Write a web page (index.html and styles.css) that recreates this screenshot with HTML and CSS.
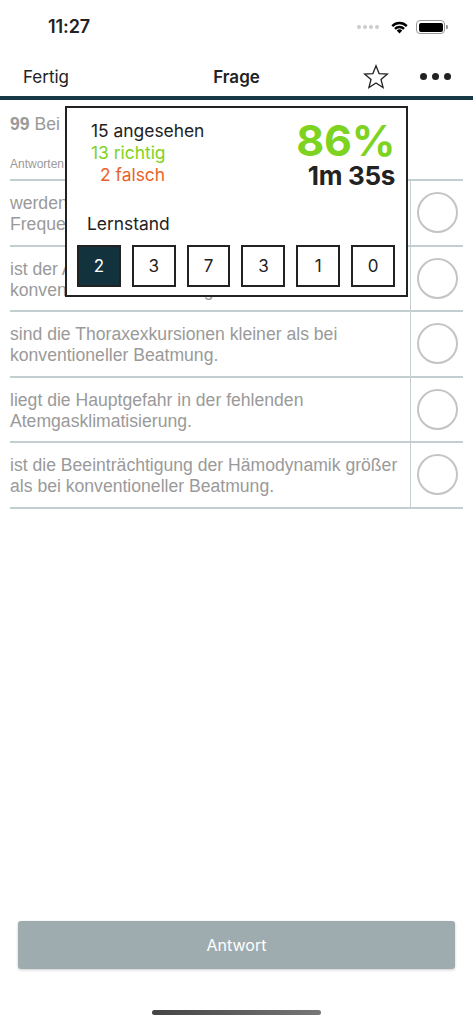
FILE: index.html
```html
<!DOCTYPE html>
<html lang="de">
<head>
<meta charset="utf-8">
<title>Frage</title>
<link rel="stylesheet" href="styles.css">
</head>
<body>
<div class="screen">
  <div class="status">
    <span class="time">11:27</span>
    <div class="status-icons">
      <span class="signal"><i></i><i></i><i></i><i></i></span>
      <svg class="wifi" width="18" height="13" viewBox="0 0 18 13"><path d="M9 12.6 6.4 9.9a3.7 3.7 0 0 1 5.2 0z" fill="#000"/><path d="M3.9 7.4a7.2 7.2 0 0 1 10.2 0l-1.6 1.6a5 5 0 0 0-7 0z" fill="#000"/><path d="M1.3 4.8a10.9 10.9 0 0 1 15.4 0l-1.6 1.6a8.6 8.6 0 0 0-12.2 0z" fill="#000"/></svg>
      <span class="battery"><span class="battery-fill"></span></span>
    </div>
  </div>
  <div class="nav">
    <span class="nav-left">Fertig</span>
    <span class="nav-title">Frage</span>
    <div class="nav-right">
      <svg class="star" width="26" height="26" viewBox="0 0 26 26"><path d="M13 1.8 16.1 9.6 24.4 10.1 18 15.4 20.1 23.5 13 19 5.9 23.5 8 15.4 1.6 10.1 9.9 9.6Z" fill="none" stroke="#222" stroke-width="1.3" stroke-linejoin="miter"/></svg>
      <span class="dots"><i></i><i></i><i></i></span>
    </div>
  </div>
  <div class="navline"></div>
  <div class="content">
    <p class="question"><b>99</b> Bei der Hochfrequenzbeatmung</p>
    <div class="label">Antworten</div>
    <ul class="answers">
      <li><span class="atext">werden hohe Atemzugvolumina mit niedriger Frequenz appliziert.</span><span class="check"><span class="circle"></span></span></li>
      <li><span class="atext">ist der Atemwegsmitteldruck höher als bei konventioneller Beatmung.</span><span class="check"><span class="circle"></span></span></li>
      <li><span class="atext">sind die Thoraxexkursionen kleiner als bei konventioneller Beatmung.</span><span class="check"><span class="circle"></span></span></li>
      <li><span class="atext">liegt die Hauptgefahr in der fehlenden Atemgasklimatisierung.</span><span class="check"><span class="circle"></span></span></li>
      <li><span class="atext">ist die Beeinträchtigung der Hämodynamik größer als bei konventioneller Beatmung.</span><span class="check"><span class="circle"></span></span></li>
    </ul>

    <div class="popup">
      <div class="stats">
        <div class="counts">
          <div>15 angesehen</div>
          <div class="good">13 richtig</div>
          <div class="bad">2 falsch</div>
        </div>
        <div class="score">
          <div class="percent">86%</div>
          <div class="duration">1m 35s</div>
        </div>
      </div>
      <div class="lern-title">Lernstand</div>
      <div class="boxes">
        <span class="box active">2</span>
        <span class="box">3</span>
        <span class="box">7</span>
        <span class="box">3</span>
        <span class="box">1</span>
        <span class="box">0</span>
      </div>
    </div>
  </div>
  <div class="footer">
    <button class="answer-btn">Antwort</button>
    <div class="home"></div>
  </div>
</div>
</body>
</html>
```

FILE: styles.css
```css
* { box-sizing: border-box; }
html, body { margin: 0; padding: 0; background: #fff; }
body { font-family: Inter, "Liberation Sans", sans-serif; color: #222; }

.screen { width: 473px; height: 1024px; display: flex; flex-direction: column; }

.status { height: 54px; display: flex; align-items: center; justify-content: space-between; padding: 0 28px 0 48px; }
.time { font-size: 18px; font-weight: 600; letter-spacing: -0.1px; margin-top: -1px; }
.status-icons { display: flex; align-items: center; gap: 7px; }
.signal { display: flex; gap: 2px; align-items: center; margin-right: 4px; }
.signal i { width: 4px; height: 4px; border-radius: 50%; background: #ccc; display: block; }
.wifi { width: 19px; height: 14px; }
.battery { width: 29px; height: 14px; border: 1px solid #999; border-radius: 4px; padding: 1.5px; position: relative; display: flex; }
.battery::after { content: ""; position: absolute; right: -4px; top: 4px; width: 2px; height: 4px; background: #999; border-radius: 0 1px 1px 0; }
.battery-fill { flex: 1; background: #000; border-radius: 2px; }

.nav { height: 42px; display: flex; align-items: center; position: relative; padding: 3px 23px 0; }
.nav-left { font-size: 17px; color: #222; }
.nav-title { position: absolute; left: 0; right: 0; text-align: center; font-size: 17px; font-weight: 600; pointer-events: none; }
.nav-right { margin-left: auto; display: flex; align-items: center; gap: 31px; margin-right: -1px; }
.star { display: block; margin-top: 0; }
.dots { display: flex; gap: 5px; }
.dots i { width: 7px; height: 7px; border-radius: 50%; background: #222; display: block; }

.navline { height: 4px; background: #173845; }

.content { flex: 1; position: relative; padding: 0 10px; }
.question { margin: 13px 0 0; font-family: "Liberation Sans", Arial, sans-serif; font-size: 17.6px; color: #9a9a9a; line-height: 22px; }
.question b { font-weight: bold; }
.label { font-family: "Liberation Sans", Arial, sans-serif; font-size: 12px; color: #9a9a9a; margin-top: 22px; height: 22px; }
.answers { list-style: none; margin: 0; padding: 0; border-top: 2px solid #c3ced1; }
.answers li { display: flex; border-bottom: 2px solid #c3ced1; height: 65.5px; }
.atext { flex: 1; font-family: "Liberation Sans", Arial, sans-serif; font-size: 17.6px; line-height: 21px; color: #9a9a9a; padding: 12px 8px 0 0; }
.check { width: 53px; border-left: 1.5px solid #c3ced1; display: flex; align-items: center; justify-content: center; }
.circle { width: 41px; height: 41px; border-radius: 50%; border: 2px solid #c4c4c4; }

.popup { position: absolute; left: 65px; top: 6px; width: 343px; height: 191px; border: 2px solid #222; background: #fff; padding: 12px 11px 0 10px; }
.stats { display: flex; justify-content: space-between; padding-left: 14px; }
.counts { font-size: 17.4px; line-height: 22px; }
.good { color: #7ed321; }
.bad { color: #e8632b; padding-left: 9px; }
.score { text-align: right; }
.percent { font-size: 43px; font-weight: 700; color: #7ed321; line-height: 40px; margin-top: 0; letter-spacing: -0.3px; }
.duration { font-size: 26px; font-weight: 700; color: #222; line-height: 30px; margin-top: 1px; letter-spacing: -0.3px; }
.lern-title { font-size: 17.4px; margin-top: 22px; padding-left: 10px; line-height: 22px; }
.boxes { display: flex; gap: 11px; margin-top: 10px; }
.box { width: 44px; height: 42px; border: 2px solid #222; display: flex; align-items: center; justify-content: center; font-size: 17px; color: #222; }
.box.active { background: #12323e; color: #fff; }

.footer { display: flex; flex-direction: column; align-items: center; padding-bottom: 9px; }
.answer-btn { width: 437px; height: 48px; border: none; border-radius: 3px; background: #9eacb0; color: #fff; font-family: Inter, "Liberation Sans", sans-serif; font-size: 16px; box-shadow: 0 1px 3px rgba(0,0,0,0.2); }
.home { width: 169px; height: 5px; border-radius: 3px; background: linear-gradient(90deg, #444, #777); margin-top: 41px; }
```
